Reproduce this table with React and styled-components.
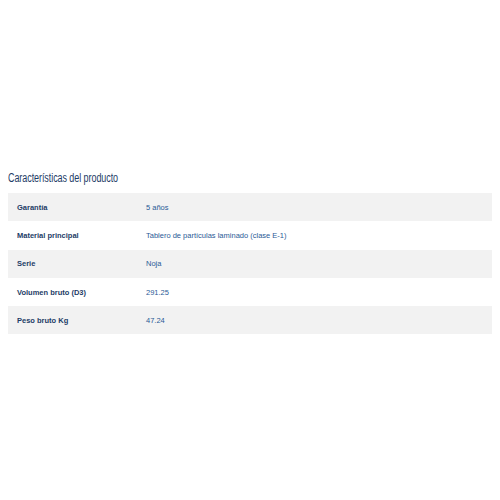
import React from "react";
import styled, { createGlobalStyle } from "styled-components";

const Global = createGlobalStyle`
  body { margin: 8px; background: #fff; font-family: "Liberation Sans", Arial, sans-serif; }
`;

const Section = styled.section`
  padding-top: 161px;
`;

const Title = styled.h2`
  margin: 0 0 6px 0;
  font-family: "Liberation Sans", Arial, sans-serif;
  font-weight: 400;
  font-size: 12.5px;
  line-height: 18px;
  color: #1d3c66;
  letter-spacing: -0.1px;
  transform: scaleX(0.72);
  transform-origin: left center;
  white-space: nowrap;
`;

const Table = styled.div`
  display: flex;
  flex-direction: column;
  width: 484px;
`;

const Row = styled.div`
  display: grid;
  grid-template-columns: 129px 1fr;
  align-items: center;
  height: 28.3px;
  padding-left: 9px;
  background: ${(p) => (p.$shaded ? "#f2f2f2" : "#fff")};
  font-size: 7.5px;
`;

const Label = styled.span`
  font-weight: 700;
  color: #1d3c66;
`;

const Value = styled.span`
  color: #2a5a96;
`;

const rows = [
  ["Garantía", "5 años"],
  ["Material principal", "Tablero de partículas laminado (clase E-1)"],
  ["Serie", "Noja"],
  ["Volumen bruto (D3)", "291.25"],
  ["Peso bruto Kg", "47.24"],
];

export default function App() {
  return (
    <>
      <Global />
      <Section>
        <Title>Características del producto</Title>
        <Table>
          {rows.map(([l, v], i) => (
            <Row key={l} $shaded={i % 2 === 0}>
              <Label>{l}</Label>
              <Value>{v}</Value>
            </Row>
          ))}
        </Table>
      </Section>
    </>
  );
}
